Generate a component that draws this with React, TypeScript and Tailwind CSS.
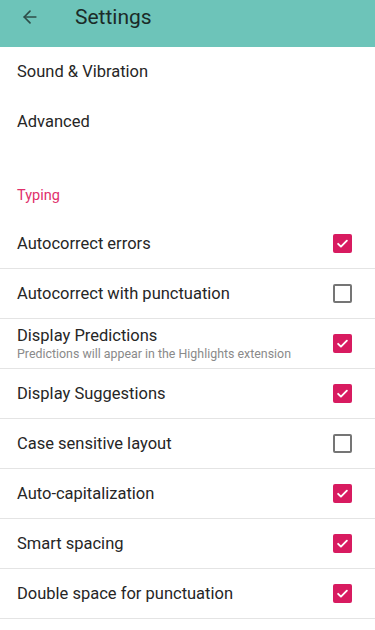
import { ArrowLeft } from "lucide-react";

type Pref = {
    title: string;
    summary?: string;
    checked: boolean;
};

const prefs: Pref[] = [
    { title: "Autocorrect errors", checked: true },
    { title: "Autocorrect with punctuation", checked: false },
    {
        title: "Display Predictions",
        summary: "Predictions will appear in the Highlights extension",
        checked: true,
    },
    { title: "Display Suggestions", checked: true },
    { title: "Case sensitive layout", checked: false },
    { title: "Auto-capitalization", checked: true },
    { title: "Smart spacing", checked: true },
    { title: "Double space for punctuation", checked: true },
];

const CheckBox = ({ checked }: { checked: boolean }) =>
    checked ? (
        <span className="flex h-[19px] w-[19px] items-center justify-center rounded-[2px] bg-[#d81b60]">
            <svg viewBox="0 0 24 24" className="h-[15px] w-[15px]" fill="none">
                <path
                    d="M5 12.5l4.5 4.5L19 7.5"
                    stroke="white"
                    strokeWidth="3"
                    strokeLinecap="round"
                    strokeLinejoin="round"
                />
            </svg>
        </span>
    ) : (
        <span className="h-[19px] w-[19px] rounded-[2px] border-2 border-[#757575]" />
    );

export default function App() {
    return (
        <div className="h-[630px] w-[375px] overflow-hidden bg-white font-['Roboto',sans-serif] text-[#262626]">
            <header className="flex h-[47px] items-start bg-[#6dc4b9] pt-[5px]">
                <ArrowLeft size={20} strokeWidth={2} className="ml-[20px] mt-[2px] text-[#2e4d48]" />
                <h1 className="ml-[35px] text-[21px] leading-[24px] text-[#1b2b28]">Settings</h1>
            </header>

            <div className="flex h-[50px] items-center px-[17px] text-[16.5px]">Sound &amp; Vibration</div>
            <div className="flex h-[50px] items-center px-[17px] text-[16.5px]">Advanced</div>

            <div className="px-[17px] pt-[40px] pb-[14px] text-[14.5px] leading-[18px] text-[#e0306b]">
                Typing
            </div>

            <ul>
                {prefs.map((pref) => (
                    <li
                        key={pref.title}
                        className="flex h-[50px] items-center justify-between border-b border-[#e4e4e4] pl-[17px] pr-[23px]"
                    >
                        <div className="flex flex-col">
                            <span className="text-[16.5px] leading-[20px]">{pref.title}</span>
                            {pref.summary && (
                                <span className="text-[12.4px] leading-[15px] text-[#8a8a8a]">{pref.summary}</span>
                            )}
                        </div>
                        <CheckBox checked={pref.checked} />
                    </li>
                ))}
            </ul>
        </div>
    );
}
